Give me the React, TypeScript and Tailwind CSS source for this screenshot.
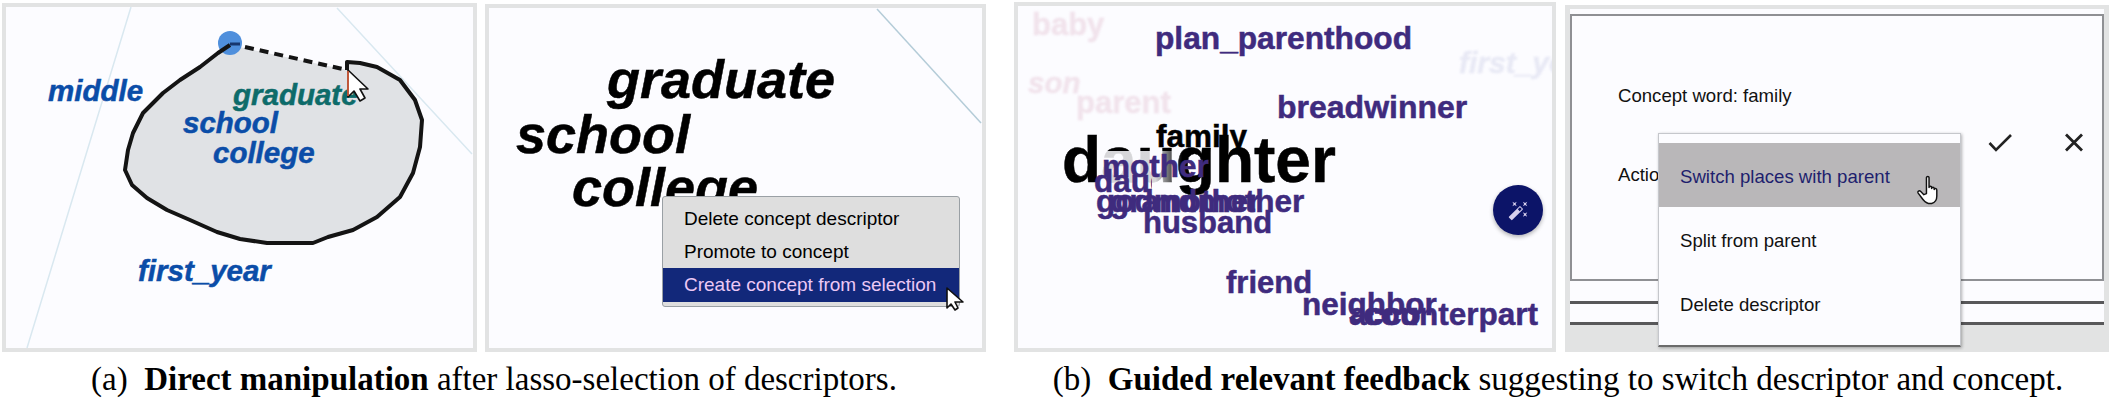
import { ReactNode } from "react";
import { MdAutoFixHigh } from "react-icons/md";

type WordProps = { children: string; className: string };

const Word = ({ children, className }: WordProps) => (
  <span className={`absolute whitespace-nowrap font-bold leading-none [-webkit-text-stroke:0.5px_currentColor] ${className}`}>
    {children}
  </span>
);

const Arrow = ({ d, box, className, children }: { d: string; box: string; className: string; children?: ReactNode }) => (
  <svg viewBox={box} className={`absolute ${className}`}>
    <path d={d} fill="#fff" stroke="#111" strokeWidth="1.6" strokeLinejoin="round" />
    {children}
  </svg>
);

const LassoPanel = () => (
  <div className="relative h-[349px] w-[475px] overflow-hidden border-4 border-[#e2e3e3] bg-[#fcfcff]">
    <svg viewBox="6 7 467 341" className="absolute inset-0 h-[341px] w-[467px]">
      <path d="M131 7 L27 348 M337 8 L472 154" stroke="#d9e8f0" strokeWidth="1.5" fill="none" />
      <path
        d="M230 45 218 53 200 67 180 80 163 93 143 113 133 133 128 150 125 170 132 185 147 198 167 210 190 220 217 232 240 239 267 243 313 243 328 237 353 230 377 217 400 197 413 173 420 147 422 120 415 100 400 80 377 67 360 63 347 62 347 70 Z"
        fill="#e0e2e5"
        stroke="none"
      />
      <circle cx="230" cy="43" r="12" fill="#4f8fdc" />
      <path
        d="M230 45 218 53 200 67 180 80 163 93 143 113 133 133 128 150 125 170 132 185 147 198 167 210 190 220 217 232 240 239 267 243 313 243 328 237 353 230 377 217 400 197 413 173 420 147 422 120 415 100 400 80 377 67 360 63 347 62 347 70"
        fill="none"
        stroke="#141414"
        strokeWidth="4"
        strokeLinejoin="round"
      />
      <path d="M230 44 H240" stroke="#17366e" strokeWidth="3" />
      <path d="M245 47 L347 70" stroke="#141414" strokeWidth="4" strokeDasharray="9 6" />
    </svg>
    <Word className="left-[42px] top-[69px] text-[29.5px] italic text-[#0b4da8]">middle</Word>
    <Word className="left-[227px] top-[73px] text-[29.5px] italic text-[#0d6b6a]">graduate</Word>
    <Word className="left-[177px] top-[101px] text-[29.5px] italic text-[#0b4da8]">school</Word>
    <Word className="left-[207px] top-[131px] text-[29.5px] italic text-[#0b4da8]">college</Word>
    <Word className="left-[132px] top-[249px] text-[29.5px] italic text-[#0b4da8]">first_year</Word>
    <Arrow
      box="0 0 24 34"
      d="M2 1 L2 28 L8 22 L14 32 L19 29 L14 20 L22 20 Z"
      className="left-[340px] top-[62px] h-[34px] w-[24px]"
    >
      <path d="M2 2 V27" stroke="#e2603a" strokeWidth="1.6" />
    </Arrow>
  </div>
);

const ContextMenuPanel = () => (
  <div className="relative h-[348px] w-[501px] overflow-hidden border-4 border-[#e2e3e3] bg-[#fcfcff]">
    <svg viewBox="489 8 493 340" className="absolute inset-0 h-[340px] w-[493px]">
      <path d="M877 9 L981 123" stroke="#b4ccd8" strokeWidth="1.5" fill="none" />
    </svg>
    <Word className="left-[118px] top-[44px] text-[54px] italic text-black">graduate</Word>
    <Word className="left-[27px] top-[99px] text-[54px] italic text-black">school</Word>
    <Word className="left-[83px] top-[152px] text-[54px] italic text-black">college</Word>
    <div className="absolute left-[173px] top-[188px] h-[111px] w-[298px] rounded-[3px] border border-[#9aa0a5] bg-[#dedede] pt-[5px] text-[19px] leading-[33px] text-black">
      <div className="pl-[21px]">Delete concept descriptor</div>
      <div className="pl-[21px]">Promote to concept</div>
      <div className="h-[34px] bg-[#12287a] pl-[21px] text-[#ecc8f5]">Create concept from selection</div>
    </div>
    <Arrow
      box="0 0 18 24"
      d="M1 1 L1 21 L5 17 L9 23 L12 21 L9 15 L17 15 Z"
      className="left-[457px] top-[279px] h-[24px] w-[18px]"
    />
  </div>
);

const CloudPanel = () => (
  <div className="relative h-[350px] w-[542px] overflow-hidden border-4 border-[#e2e3e3] bg-[#fcfcff]">
    <Word className="left-[14px] top-[3px] text-[31px] text-[#f1e3ec] blur-[1px]">baby</Word>
    <Word className="left-[137px] top-[17px] text-[31.7px] text-[#3f2b7e]">plan_parenthood</Word>
    <Word className="left-[441px] top-[42px] text-[30px] italic text-[#e8e9f5] blur-[1px]">first_year</Word>
    <Word className="left-[10px] top-[62px] text-[29.5px] italic text-[#f1e3ec] blur-[1px]">son</Word>
    <Word className="left-[58px] top-[81px] text-[31px] text-[#f1e3ec] blur-[1px]">parent</Word>
    <Word className="left-[259px] top-[85px] text-[32px] text-[#3f2b7e]">breadwinner</Word>
    <Word className="left-[44px] top-[122px] text-[64px] text-black">daughter</Word>
    <Word className="left-[138px] top-[115px] text-[31.5px] text-black">family</Word>
    <Word className="left-[84px] top-[145px] bg-linear-to-r from-[#fcfcff]/85 via-[#fcfcff]/85 via-50% to-transparent to-75% text-[31.5px] text-[#3f2b7e]">
      mother
    </Word>
    <Word className="left-[76px] top-[160px] w-[58px] overflow-hidden text-[31.5px] text-[#3f2b7e]">daughter</Word>
    <Word className="left-[78px] top-[180px] text-[31.5px] text-[#3f2b7e]">godmother</Word>
    <Word className="left-[92px] top-[180px] text-[31.5px] text-[#3f2b7e]">grandmother</Word>
    <Word className="left-[125px] top-[201px] text-[31px] text-[#3f2b7e]">husband</Word>
    <Word className="left-[208px] top-[261px] text-[31px] text-[#3f2b7e]">friend</Word>
    <Word className="left-[284px] top-[283px] text-[31.5px] text-[#3f2b7e]">neighbor</Word>
    <Word className="left-[331px] top-[293px] text-[31.5px] text-[#3f2b7e]">acco</Word>
    <Word className="left-[345px] top-[293px] text-[31.5px] text-[#3f2b7e]">counterpart</Word>
    <button className="absolute left-[475px] top-[179px] flex h-[50px] w-[50px] items-center justify-center rounded-full bg-[#0c1468] text-[#d8d0ee] shadow-[0_2px_4px_rgba(0,0,0,0.3)]">
      <MdAutoFixHigh size={21} />
    </button>
  </div>
);

const DialogPanel = () => (
  <div className="relative h-[347px] w-[544px] bg-[#e2e3e3] px-[5px] pt-[4px] text-[18.6px] text-[#111]">
    <div className="bg-[#fcfcff] pt-[5px]">
      <div className="flex h-[267px] border-2 border-[#8f9094]">
        <div className="flex-1 pl-[46px] pt-[66px] leading-[28px]">
          <div>Concept word: family</div>
          <div className="mt-[51px]">Action</div>
        </div>
        <div className="flex items-start gap-[52px] pr-[18px] pt-[117px]">
          <svg viewBox="0 0 24 19" className="h-[19px] w-[24px]">
            <path d="M1.5 10 L8 17 L23 2" fill="none" stroke="#222" strokeWidth="2.6" />
          </svg>
          <svg viewBox="0 0 20 19" className="h-[19px] w-[20px]">
            <path d="M2 1.5 L18 17.5 M18 1.5 L2 17.5" fill="none" stroke="#222" strokeWidth="2.8" />
          </svg>
        </div>
      </div>
      <div className="h-[20px]" />
      <div className="h-[3px] bg-[#58585a]" />
      <div className="h-[18px]" />
      <div className="h-[3px] bg-[#58585a]" />
    </div>
    <div className="absolute left-[93px] top-[128px] h-[214px] w-[303px] border border-b-2 border-[#c5c7cc] border-b-[#6b6b6b] bg-[#fcfcff] pt-[9px] shadow-[1px_1px_3px_rgba(0,0,0,0.3)]">
      <div className="flex h-[64px] items-center bg-[#b9b7b9] pl-[21px] pt-[4px] text-[#1e1f6e]">Switch places with parent</div>
      <div className="flex h-[64px] items-center pl-[21px] pt-[4px]">Split from parent</div>
      <div className="flex h-[64px] items-center pl-[21px] pt-[4px]">Delete descriptor</div>
      <svg viewBox="-1 0 20 29" className="absolute left-[258px] top-[41px] h-[30px] w-[22px]">
        <path
          d="M7.5 2.5c0-1.5 2.5-1.5 2.5 0v9.5c0-1.5 2.5-1.5 2.5 0v1c0-1.5 2.5-1.5 2.5 0v1c0-1.3 2.5-1.3 2.5 0.5v6c0 3-1.5 6-5 7h-3c-3-0.5-5-3-7-6l-3-4c-1-1.5 1-3 2.5-1.5l3 3L7.5 18V2.5z"
          fill="#fff"
          stroke="#111"
          strokeWidth="1.4"
          strokeLinejoin="round"
        />
      </svg>
    </div>
  </div>
);

const Caption = ({ label, bold, rest, className }: { label: string; bold: string; rest: string; className?: string }) => (
  <p className={`whitespace-pre text-center font-['Liberation_Serif',serif] text-[33px] leading-[54px] text-black ${className ?? ""}`}>
    {label}
    {"  "}
    <b>{bold}</b> {rest}
  </p>
);

export default function App() {
  return (
    <div className="flex h-[409px] w-[2112px] overflow-hidden bg-white pl-[2px] pt-[2px] font-['Liberation_Sans',Arial,sans-serif]">
      <figure className="w-[984px]">
        <div className="flex h-[350px] items-end gap-[8px]">
          <LassoPanel />
          <ContextMenuPanel />
        </div>
        <Caption label="(a)" bold="Direct manipulation" rest="after lasso-selection of descriptors." />
      </figure>
      <figure className="ml-[28px] w-[1095px]">
        <div className="flex h-[350px] items-end gap-[9px]">
          <CloudPanel />
          <DialogPanel />
        </div>
        <Caption
          label="(b)"
          bold="Guided relevant feedback"
          rest="suggesting to switch descriptor and concept."
          className="pr-[7px]"
        />
      </figure>
    </div>
  );
}
